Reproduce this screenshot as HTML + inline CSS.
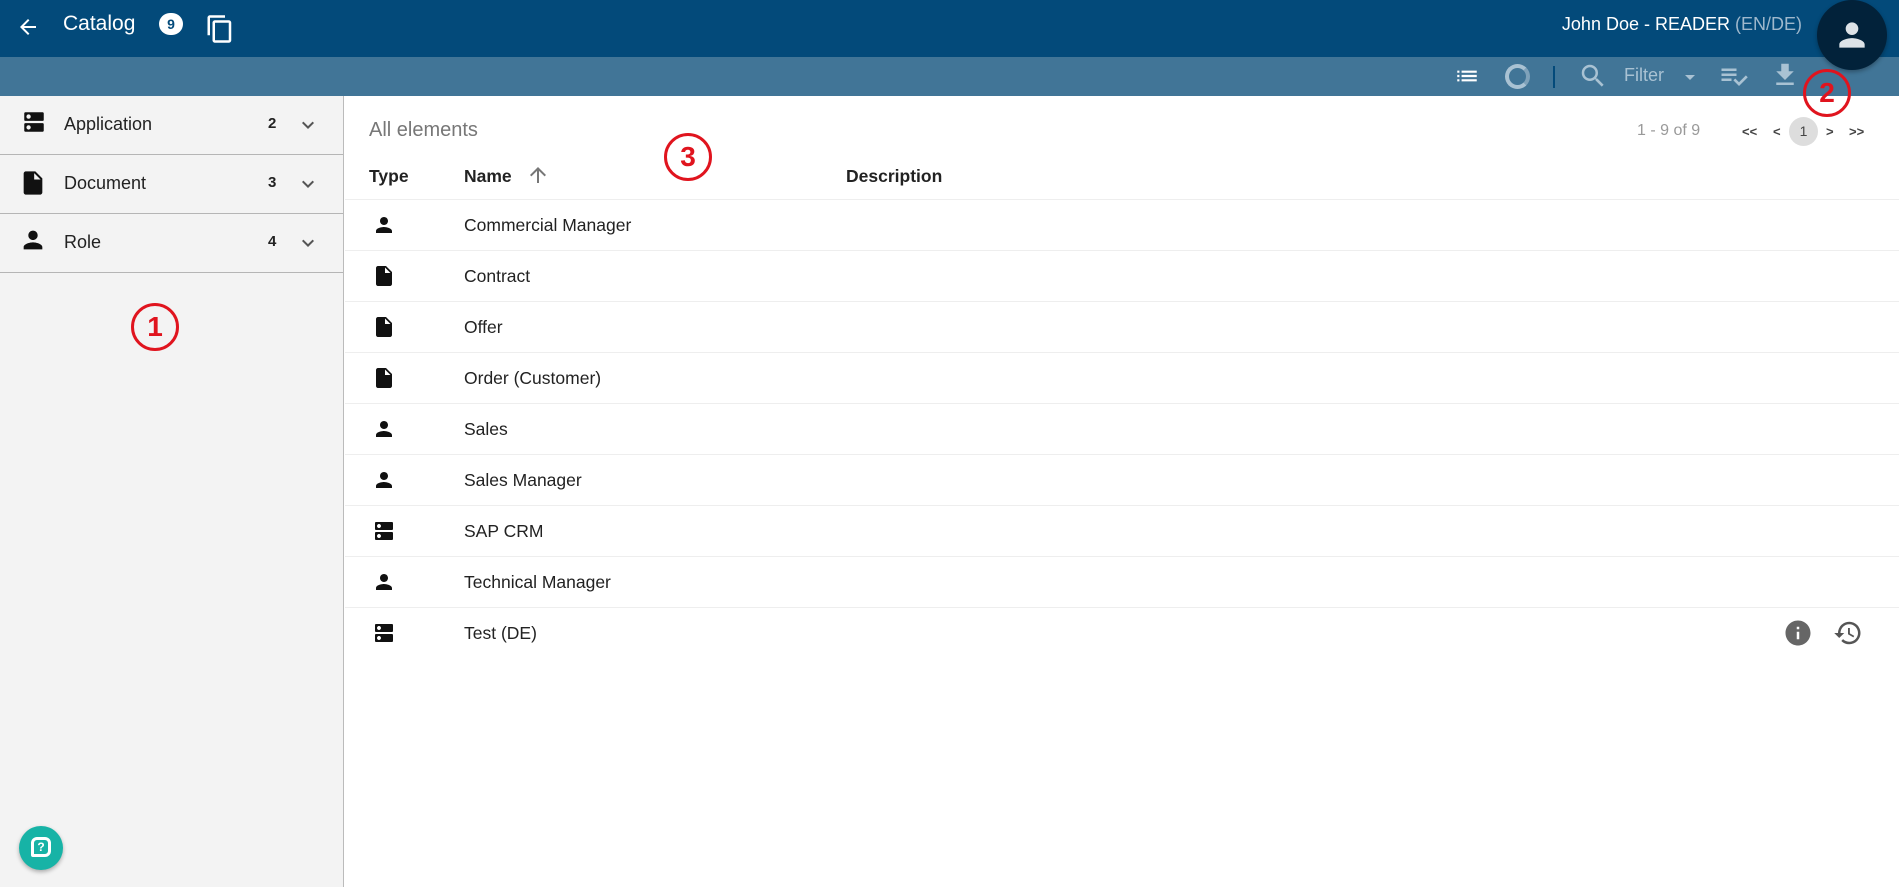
<!DOCTYPE html>
<html><head><meta charset="utf-8"><style>
*{margin:0;padding:0;box-sizing:border-box}
body{width:1899px;height:887px;overflow:hidden;font-family:"Liberation Sans",sans-serif;background:#fff;position:relative;color:#222}
.abs{position:absolute}
.top{left:0;top:0;width:1899px;height:57px;background:#034a7a}
.sub{left:0;top:57px;width:1899px;height:39px;background:#417597}
.side{left:0;top:96px;width:344px;height:791px;background:#f3f3f3;border-right:1px solid #bbb}
.srow{position:absolute;left:0;width:343px;height:59px;border-bottom:1px solid #b5b5b5;font-size:18px}
.srow .t{position:absolute;left:64px;top:18px}
.srow .n{position:absolute;left:268px;top:19px;font-weight:bold;font-size:15px}
.srow svg{position:absolute}
.row{position:absolute;left:345px;width:1554px;height:51px;border-bottom:1px solid #eee;font-size:17.5px}
.row .nm{position:absolute;left:119px;top:15px}
.row svg{position:absolute;left:27px;top:13px}
.circ{border:3px solid #e0141e;border-radius:50%;color:#e0141e;font-weight:bold;font-size:28px;text-align:center;line-height:42px;width:48px;height:48px}
</style></head><body>
<div class="abs top"></div>
<div class="abs sub"></div>
<!-- back arrow -->
<svg class="abs" style="left:16px;top:15px" width="24" height="24" viewBox="0 0 24 24"><path d="M20 11H7.83l5.59-5.59L12 4l-8 8 8 8 1.41-1.41L7.83 13H20v-2z" fill="#fff"/></svg>
<div class="abs" style="left:63px;top:12px;color:#fff;font-size:21px">Catalog</div>
<div class="abs" style="left:159px;top:13px;width:24px;height:22px;border-radius:11px;background:#fff;color:#034a7a;font-weight:bold;font-size:14px;text-align:center;line-height:22px">9</div>
<svg class="abs" style="left:205px;top:14px" width="30" height="30" viewBox="0 0 24 24"><path d="M16 1H4c-1.1 0-2 .9-2 2v14h2V3h12V1zm3 4H8c-1.1 0-2 .9-2 2v14c0 1.1.9 2 2 2h11c1.1 0 2-.9 2-2V7c0-1.1-.9-2-2-2zm0 16H8V7h11v14z" fill="#fff"/></svg>
<div class="abs" style="right:97px;top:14px;color:#fff;font-size:18px">John Doe - READER <span style="color:#9fb8cc">(EN/DE)</span></div>
<div class="abs" style="left:1817px;top:0px;width:70px;height:70px;border-radius:50%;background:#02223a;box-shadow:0 2px 4px rgba(0,0,0,.3)"></div>
<svg class="abs" style="left:1833px;top:16px" width="38" height="38" viewBox="0 0 24 24"><path d="M12 12c2.21 0 4-1.79 4-4s-1.79-4-4-4-4 1.79-4 4 1.79 4 4 4zm0 2c-2.67 0-8 1.34-8 4v2h16v-2c0-2.66-5.33-4-8-4z" fill="#dde3e8"/></svg>
<!-- toolbar -->
<svg class="abs" style="left:1454px;top:63px" width="26" height="26" viewBox="0 0 24 24"><path d="M3 13h2v-2H3v2zm0 4h2v-2H3v2zm0-8h2V7H3v2zm4 4h14v-2H7v2zm0 4h14v-2H7v2zM7 7v2h14V7H7z" fill="#fff"/></svg>
<div class="abs" style="left:1505px;top:64px;width:25px;height:25px;border-radius:50%;border:4px solid #a9c2d3;border-right-color:#7fa2ba"></div>
<div class="abs" style="left:1553px;top:66px;width:2px;height:22px;background:#034a7a"></div>
<svg class="abs" style="left:1578px;top:61px" width="30" height="30" viewBox="0 0 24 24"><path d="M15.5 14h-.79l-.28-.27A6.47 6.47 0 0016 9.5 6.5 6.5 0 109.5 16c1.61 0 3.09-.59 4.23-1.57l.27.28v.79l5 4.99L20.49 19l-4.99-5zm-6 0C7.01 14 5 11.99 5 9.5S7.01 5 9.5 5 14 7.01 14 9.5 11.99 14 9.5 14z" fill="#a9c2d3"/></svg>
<div class="abs" style="left:1624px;top:65px;color:#a9c2d3;font-size:18px">Filter</div>
<svg class="abs" style="left:1678px;top:65px" width="24" height="24" viewBox="0 0 24 24"><path d="M7 10l5 5 5-5z" fill="#a9c2d3"/></svg>
<svg class="abs" style="left:1719px;top:61px" width="30" height="30" viewBox="0 0 24 24"><path d="M14 10H2v2h12v-2zm0-4H2v2h12V6zM2 16h8v-2H2v2zm19.5-4.5L23 13l-6.99 7-4.51-4.5L13 14l3.01 3 5.49-5.5z" fill="#a9c2d3"/></svg>
<svg class="abs" style="left:1770px;top:60px" width="30" height="30" viewBox="0 0 24 24"><path d="M19 9h-4V3H9v6H5l7 7 7-7zM5 18v2h14v-2H5z" fill="#a9c2d3"/></svg>
<!-- sidebar -->
<div class="abs side">
 <div class="srow" style="top:0"><svg style="left:21px;top:13px" width="26" height="26" viewBox="0 0 24 24"><path d="M20 13H4c-.55 0-1 .45-1 1v6c0 .55.45 1 1 1h16c.55 0 1-.45 1-1v-6c0-.55-.45-1-1-1zM7 19c-1.1 0-2-.9-2-2s.9-2 2-2 2 .9 2 2-.9 2-2 2zM20 3H4c-.55 0-1 .45-1 1v6c0 .55.45 1 1 1h16c.55 0 1-.45 1-1V4c0-.55-.45-1-1-1zM7 9c-1.1 0-2-.9-2-2s.9-2 2-2 2 .9 2 2-.9 2-2 2z" fill="#111"/></svg><span class="t">Application</span><span class="n">2</span><svg style="left:296px;top:17px" width="24" height="24" viewBox="0 0 24 24"><path d="M7.41 8.59L12 13.17l4.59-4.58L18 10l-6 6-6-6z" fill="#555"/></svg></div>
 <div class="srow" style="top:59px"><svg style="left:19px;top:14px" width="28" height="28" viewBox="0 0 24 24"><path d="M6 2c-1.1 0-2 .9-2 2v16c0 1.1.9 2 2 2h12c1.1 0 2-.9 2-2V8l-6-6H6zm7 7V3.5L18.5 9H13z" fill="#111"/></svg><span class="t">Document</span><span class="n">3</span><svg style="left:296px;top:17px" width="24" height="24" viewBox="0 0 24 24"><path d="M7.41 8.59L12 13.17l4.59-4.58L18 10l-6 6-6-6z" fill="#555"/></svg></div>
 <div class="srow" style="top:118px"><svg style="left:19px;top:12px" width="28" height="28" viewBox="0 0 24 24"><path d="M12 12c2.21 0 4-1.79 4-4s-1.79-4-4-4-4 1.79-4 4 1.79 4 4 4zm0 2c-2.67 0-8 1.34-8 4v2h16v-2c0-2.66-5.33-4-8-4z" fill="#111"/></svg><span class="t">Role</span><span class="n">4</span><svg style="left:296px;top:17px" width="24" height="24" viewBox="0 0 24 24"><path d="M7.41 8.59L12 13.17l4.59-4.58L18 10l-6 6-6-6z" fill="#555"/></svg></div>
</div>
<div class="abs circ" style="left:131px;top:303px">1</div>
<div class="abs circ" style="left:1803px;top:69px">2</div>
<div class="abs circ" style="left:664px;top:133px">3</div>
<div class="abs" style="left:19px;top:826px;width:44px;height:44px;border-radius:50%;background:#17b3a6;box-shadow:0 2px 4px rgba(0,0,0,.3)"></div>
<div class="abs" style="left:31px;top:837px;width:20px;height:20px;border:3px solid #fff;border-radius:6px 6px 6px 2px;color:#fff;font-size:12px;font-weight:bold;text-align:center;line-height:14px">?</div>
<!-- content -->
<div class="abs" style="left:369px;top:119px;font-size:20px;color:#777">All elements</div>
<div class="abs" style="left:1637px;top:122px;font-size:16px;color:#999">1 - 9 of 9</div>
<div class="abs" style="left:1742px;top:124px;font-size:13px;color:#444;font-weight:bold">&lt;&lt;</div>
<div class="abs" style="left:1773px;top:124px;font-size:13px;color:#444;font-weight:bold">&lt;</div>
<div class="abs" style="left:1789px;top:117px;width:29px;height:29px;border-radius:50%;background:#ddd;font-size:14px;text-align:center;line-height:29px;color:#444">1</div>
<div class="abs" style="left:1826px;top:124px;font-size:13px;color:#444;font-weight:bold">&gt;</div>
<div class="abs" style="left:1849px;top:124px;font-size:13px;color:#444;font-weight:bold">&gt;&gt;</div>
<div class="abs" style="left:345px;top:152px;width:1554px;height:48px;border-bottom:1px solid #eee;font-size:17.5px;font-weight:bold">
 <span class="abs" style="left:24px;top:14px">Type</span>
 <span class="abs" style="left:119px;top:14px">Name</span>
 <svg class="abs" style="left:181px;top:11px" width="24" height="24" viewBox="0 0 24 24"><path d="M4 12l1.41 1.41L11 7.83V20h2V7.83l5.58 5.59L20 12l-8-8-8 8z" fill="#777"/></svg>
 <span class="abs" style="left:501px;top:14px">Description</span>
</div>
<div class="row" style="top:200px"><svg width="24" height="24" viewBox="0 0 24 24"><path d="M12 12c2.21 0 4-1.79 4-4s-1.79-4-4-4-4 1.79-4 4 1.79 4 4 4zm0 2c-2.67 0-8 1.34-8 4v2h16v-2c0-2.66-5.33-4-8-4z" fill="#111"/></svg><span class="nm">Commercial Manager</span></div>
<div class="row" style="top:251px"><svg width="24" height="24" viewBox="0 0 24 24"><path d="M6 2c-1.1 0-2 .9-2 2v16c0 1.1.9 2 2 2h12c1.1 0 2-.9 2-2V8l-6-6H6zm7 7V3.5L18.5 9H13z" fill="#111"/></svg><span class="nm">Contract</span></div>
<div class="row" style="top:302px"><svg width="24" height="24" viewBox="0 0 24 24"><path d="M6 2c-1.1 0-2 .9-2 2v16c0 1.1.9 2 2 2h12c1.1 0 2-.9 2-2V8l-6-6H6zm7 7V3.5L18.5 9H13z" fill="#111"/></svg><span class="nm">Offer</span></div>
<div class="row" style="top:353px"><svg width="24" height="24" viewBox="0 0 24 24"><path d="M6 2c-1.1 0-2 .9-2 2v16c0 1.1.9 2 2 2h12c1.1 0 2-.9 2-2V8l-6-6H6zm7 7V3.5L18.5 9H13z" fill="#111"/></svg><span class="nm">Order (Customer)</span></div>
<div class="row" style="top:404px"><svg width="24" height="24" viewBox="0 0 24 24"><path d="M12 12c2.21 0 4-1.79 4-4s-1.79-4-4-4-4 1.79-4 4 1.79 4 4 4zm0 2c-2.67 0-8 1.34-8 4v2h16v-2c0-2.66-5.33-4-8-4z" fill="#111"/></svg><span class="nm">Sales</span></div>
<div class="row" style="top:455px"><svg width="24" height="24" viewBox="0 0 24 24"><path d="M12 12c2.21 0 4-1.79 4-4s-1.79-4-4-4-4 1.79-4 4 1.79 4 4 4zm0 2c-2.67 0-8 1.34-8 4v2h16v-2c0-2.66-5.33-4-8-4z" fill="#111"/></svg><span class="nm">Sales Manager</span></div>
<div class="row" style="top:506px"><svg width="24" height="24" viewBox="0 0 24 24"><path d="M20 13H4c-.55 0-1 .45-1 1v6c0 .55.45 1 1 1h16c.55 0 1-.45 1-1v-6c0-.55-.45-1-1-1zM7 19c-1.1 0-2-.9-2-2s.9-2 2-2 2 .9 2 2-.9 2-2 2zM20 3H4c-.55 0-1 .45-1 1v6c0 .55.45 1 1 1h16c.55 0 1-.45 1-1V4c0-.55-.45-1-1-1zM7 9c-1.1 0-2-.9-2-2s.9-2 2-2 2 .9 2 2-.9 2-2 2z" fill="#111"/></svg><span class="nm">SAP CRM</span></div>
<div class="row" style="top:557px"><svg width="24" height="24" viewBox="0 0 24 24"><path d="M12 12c2.21 0 4-1.79 4-4s-1.79-4-4-4-4 1.79-4 4 1.79 4 4 4zm0 2c-2.67 0-8 1.34-8 4v2h16v-2c0-2.66-5.33-4-8-4z" fill="#111"/></svg><span class="nm">Technical Manager</span></div>
<div class="row" style="top:608px;border-bottom:none"><svg width="24" height="24" viewBox="0 0 24 24"><path d="M20 13H4c-.55 0-1 .45-1 1v6c0 .55.45 1 1 1h16c.55 0 1-.45 1-1v-6c0-.55-.45-1-1-1zM7 19c-1.1 0-2-.9-2-2s.9-2 2-2 2 .9 2 2-.9 2-2 2zM20 3H4c-.55 0-1 .45-1 1v6c0 .55.45 1 1 1h16c.55 0 1-.45 1-1V4c0-.55-.45-1-1-1zM7 9c-1.1 0-2-.9-2-2s.9-2 2-2 2 .9 2 2-.9 2-2 2z" fill="#111"/></svg><span class="nm">Test (DE)</span>
 <svg style="left:1438px;top:10px" width="30" height="30" viewBox="0 0 24 24"><path d="M12 2C6.48 2 2 6.48 2 12s4.48 10 10 10 10-4.48 10-10S17.52 2 12 2zm1 15h-2v-6h2v6zm0-8h-2V7h2v2z" fill="#666"/></svg>
 <svg style="left:1488px;top:10px" width="30" height="30" viewBox="0 0 24 24"><path d="M13 3a9 9 0 00-9 9H1l3.89 3.89.07.14L9 12H6c0-3.87 3.13-7 7-7s7 3.13 7 7-3.13 7-7 7c-1.93 0-3.68-.79-4.94-2.06l-1.42 1.42A8.954 8.954 0 0013 21a9 9 0 000-18zm-1 5v5l4.28 2.54.72-1.21-3.5-2.08V8H12z" fill="#555"/></svg>
</div>
</body></html>
